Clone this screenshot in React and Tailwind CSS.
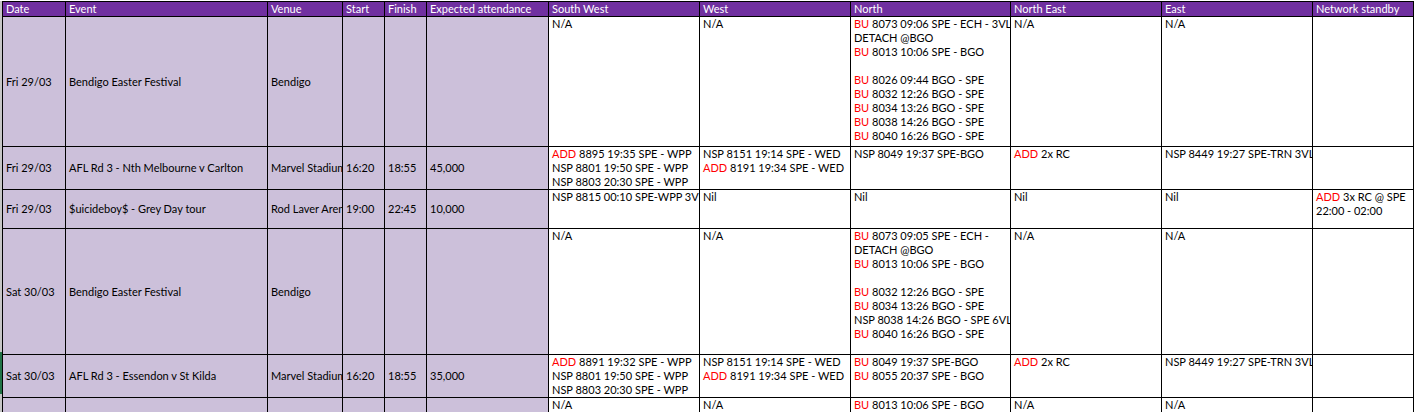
const widths = [63, 202, 75, 42, 42, 122, 151, 151, 160, 151, 151, 101];
const headers = ["Date", "Event", "Venue", "Start", "Finish", "Expected attendance", "South West", "West", "North", "North East", "East", "Network standby"];

const R = ({ children }) => <span className="text-[#ff0000]">{children}</span>;
const L = ({ children }) => <div className="h-[14px] whitespace-nowrap">{children}</div>;
const BU = ({ t }) => <L><R>BU</R> {t}</L>;
const ADD = ({ t }) => <L><R>ADD</R> {t}</L>;
const T = ({ t }) => <L>{t}</L>;

const rows = [
  {
    h: 130,
    left: ["Fri 29/03", "Bendigo Easter Festival", "Bendigo", "", "", ""],
    right: [
      <T t="N/A" />,
      <T t="N/A" />,
      <>
        <BU t="8073 09:06 SPE - ECH - 3VL" />
        <T t="DETACH @BGO" />
        <BU t="8013 10:06 SPE - BGO" />
        <L />
        <BU t="8026 09:44 BGO - SPE" />
        <BU t="8032 12:26 BGO - SPE" />
        <BU t="8034 13:26 BGO - SPE" />
        <BU t="8038 14:26 BGO - SPE" />
        <BU t="8040 16:26 BGO - SPE" />
      </>,
      <T t="N/A" />,
      <T t="N/A" />,
      null,
    ],
  },
  {
    h: 42,
    left: ["Fri 29/03", "AFL Rd 3 - Nth Melbourne v Carlton", "Marvel Stadium", "16:20", "18:55", "45,000"],
    right: [
      <>
        <ADD t="8895 19:35 SPE - WPP" />
        <T t="NSP 8801 19:50 SPE - WPP" />
        <T t="NSP 8803 20:30 SPE - WPP" />
      </>,
      <>
        <T t="NSP 8151 19:14 SPE - WED" />
        <ADD t="8191 19:34 SPE - WED" />
      </>,
      <T t="NSP 8049 19:37 SPE-BGO" />,
      <ADD t="2x RC" />,
      <T t="NSP 8449 19:27 SPE-TRN 3VL" />,
      null,
    ],
  },
  {
    h: 39,
    left: ["Fri 29/03", "$uicideboy$ - Grey Day tour", "Rod Laver Arena", "19:00", "22:45", "10,000"],
    right: [
      <T t="NSP 8815 00:10 SPE-WPP 3VL" />,
      <T t="Nil" />,
      <T t="Nil" />,
      <T t="Nil" />,
      <T t="Nil" />,
      <>
        <ADD t="3x RC @ SPE" />
        <T t="22:00 - 02:00" />
      </>,
    ],
  },
  {
    h: 126,
    left: ["Sat 30/03", "Bendigo Easter Festival", "Bendigo", "", "", ""],
    right: [
      <T t="N/A" />,
      <T t="N/A" />,
      <>
        <BU t="8073 09:05 SPE - ECH -" />
        <T t="DETACH @BGO" />
        <BU t="8013 10:06 SPE - BGO" />
        <L />
        <BU t="8032 12:26 BGO - SPE" />
        <BU t="8034 13:26 BGO - SPE" />
        <T t="NSP 8038 14:26 BGO - SPE 6VL" />
        <BU t="8040 16:26 BGO - SPE" />
      </>,
      <T t="N/A" />,
      <T t="N/A" />,
      null,
    ],
  },
  {
    h: 42,
    selected: true,
    left: ["Sat 30/03", "AFL Rd 3 - Essendon v St Kilda", "Marvel Stadium", "16:20", "18:55", "35,000"],
    right: [
      <>
        <ADD t="8891 19:32 SPE - WPP" />
        <T t="NSP 8801 19:50 SPE - WPP" />
        <T t="NSP 8803 20:30 SPE - WPP" />
      </>,
      <>
        <T t="NSP 8151 19:14 SPE - WED" />
        <ADD t="8191 19:34 SPE - WED" />
      </>,
      <>
        <BU t="8049 19:37 SPE-BGO" />
        <BU t="8055 20:37 SPE - BGO" />
      </>,
      <ADD t="2x RC" />,
      <T t="NSP 8449 19:27 SPE-TRN 3VL" />,
      null,
    ],
  },
  {
    h: 60,
    left: ["", "", "", "", "", ""],
    right: [
      <T t="N/A" />,
      <T t="N/A" />,
      <BU t="8013 10:06 SPE - BGO" />,
      <T t="N/A" />,
      <T t="N/A" />,
      null,
    ],
  },
];

export default function App() {
  return (
    <div className="h-[412px] w-[1416px] overflow-hidden bg-white pt-px font-['Lato',sans-serif] text-[11px] leading-[14px] text-black">
      <div className="flex">
        <div className="w-[2px] shrink-0">
          <div className="h-[351px] bg-[#c6c6c6]" />
          <div className="h-[42px] bg-[#217346]" />
          <div className="h-[18px] bg-[#c6c6c6]" />
        </div>
        <table className="w-[1411px] table-fixed border-collapse">
          <colgroup>
            {widths.map((w, i) => (
              <col key={i} style={{ width: w }} />
            ))}
          </colgroup>
          <thead>
            <tr>
              {headers.map((h) => (
                <th key={h} className="h-[14px] overflow-hidden whitespace-nowrap border border-black bg-[#7030a0] px-[3px] py-0 text-left font-normal text-white">
                  {h}
                </th>
              ))}
            </tr>
          </thead>
          <tbody>
            {rows.map((r, i) => (
              <tr key={i}>
                {r.left.map((c, j) => (
                  <td key={j} style={{ height: r.h }} className="overflow-hidden whitespace-nowrap border border-black bg-[#ccc0da] py-0 pl-[3px] pr-0 align-middle">
                    {c}
                  </td>
                ))}
                {r.right.map((c, j) => (
                  <td key={j} className="overflow-hidden border border-black bg-white px-[3px] py-0 align-top">
                    {c}
                  </td>
                ))}
              </tr>
            ))}
          </tbody>
        </table>
      </div>
    </div>
  );
}
